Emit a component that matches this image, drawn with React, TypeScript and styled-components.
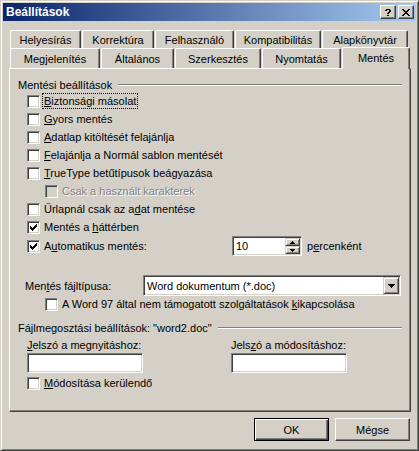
import React, { FC, ReactNode } from "react";
import styled, { createGlobalStyle } from "styled-components";

const FACE = "#d4d0c8";
const SHADOW = "#808080";
const DARK = "#404040";

const GlobalStyle = createGlobalStyle`
  html, body {
    margin: 0;
    padding: 0;
    background: ${FACE};
  }
  body {
    font-family: "Liberation Sans", Arial, sans-serif;
    font-size: 11px;
    line-height: 14px;
    color: #000;
  }
`;

const Window = styled.div`
  box-sizing: border-box;
  width: 419px;
  height: 451px;
  border: 1px solid;
  border-color: ${FACE} ${DARK} ${DARK} ${FACE};
  box-shadow: inset 1px 1px #fff, inset -1px -1px ${SHADOW};
  padding: 2px;
  background: ${FACE};
  display: flex;
  flex-direction: column;
`;

const TitleBar = styled.div`
  height: 18px;
  display: flex;
  align-items: center;
  padding: 0 2px 0 3px;
  background: linear-gradient(to right, #0a246a, #a6caf0);
`;

const Title = styled.div`
  flex: 1;
  color: #fff;
  font-weight: bold;
  font-size: 12px;
`;

const CaptionButton = styled.div<{ $gap?: number }>`
  box-sizing: border-box;
  width: 16px;
  height: 14px;
  margin-left: ${({ $gap }) => $gap ?? 0}px;
  background: ${FACE};
  border: 1px solid;
  border-color: #fff ${DARK} ${DARK} #fff;
  box-shadow: inset -1px -1px ${SHADOW};
  display: flex;
  align-items: center;
  justify-content: center;
`;

const Body = styled.div`
  padding-top: 9px;
`;

const TabRow = styled.div<{ $height: number }>`
  display: flex;
  align-items: flex-end;
  height: ${({ $height }) => $height}px;
  margin-left: 7px;
`;

const Tab = styled.div<{ $w: number; $h: number; $active?: boolean }>`
  box-sizing: border-box;
  flex: none;
  width: ${({ $w }) => $w}px;
  height: ${({ $h }) => $h}px;
  margin-right: 1px;
  margin-bottom: ${({ $active }) => ($active ? -1 : 0)}px;
  padding-bottom: ${({ $active }) => ($active ? 2 : 0)}px;
  align-self: ${({ $active }) => ($active ? "flex-end" : "flex-start")};
  border-top: 1px solid #fff;
  border-left: 1px solid #fff;
  border-right: 1px solid ${DARK};
  border-radius: 2px 2px 0 0;
  box-shadow: inset -1px 0 ${SHADOW};
  background: ${FACE};
  display: flex;
  align-items: center;
  justify-content: center;
  position: relative;
  z-index: ${({ $active }) => ($active ? 2 : 1)};
`;

const Panel = styled.div`
  box-sizing: border-box;
  width: 402px;
  height: 344px;
  margin-left: 6px;
  border: 1px solid;
  border-color: #fff ${DARK} ${DARK} #fff;
  box-shadow: inset -1px -1px ${SHADOW};
  padding: 9px 8px 0 8px;
`;

const GroupHeader = styled.div<{ $top?: number }>`
  display: flex;
  align-items: center;
  height: 14px;
  margin-top: ${({ $top }) => $top ?? 0}px;
`;

const GroupLine = styled.div`
  flex: 1;
  height: 0;
  border-top: 1px solid ${SHADOW};
  border-bottom: 1px solid #fff;
  margin-left: 6px;
`;

const CheckRow = styled.div<{ $indent: number; $h?: number; $top?: number }>`
  display: flex;
  align-items: center;
  height: ${({ $h }) => $h ?? 18}px;
  margin-left: ${({ $indent }) => $indent}px;
  margin-top: ${({ $top }) => $top ?? 0}px;
`;

const CheckItem = styled.div<{ $w?: number }>`
  display: flex;
  align-items: center;
  gap: 4px;
  width: ${({ $w }) => ($w ? `${$w}px` : "auto")};
  flex: none;
`;

const Box = styled.span<{ $disabled?: boolean }>`
  box-sizing: border-box;
  width: 13px;
  height: 13px;
  flex: none;
  border: 1px solid;
  border-color: ${SHADOW} #fff #fff ${SHADOW};
  box-shadow: inset 1px 1px ${DARK}, inset -1px -1px ${FACE};
  background: ${({ $disabled }) => ($disabled ? FACE : "#fff")};
  display: flex;
  align-items: center;
  justify-content: center;
`;

const Label = styled.span<{ $disabled?: boolean; $focus?: boolean }>`
  white-space: nowrap;
  color: ${({ $disabled }) => ($disabled ? SHADOW : "#000")};
  text-shadow: ${({ $disabled }) => ($disabled ? "1px 1px #fff" : "none")};
  border: ${({ $focus }) => ($focus ? "1px dotted #000" : "none")};
  padding: ${({ $focus }) => ($focus ? "0 1px" : "0")};
  margin-left: ${({ $focus }) => ($focus ? -2 : 0)}px;
`;

const Sunken = styled.div<{ $w: number; $h: number }>`
  box-sizing: border-box;
  width: ${({ $w }) => $w}px;
  height: ${({ $h }) => $h}px;
  flex: none;
  border: 1px solid;
  border-color: ${SHADOW} #fff #fff ${SHADOW};
  box-shadow: inset 1px 1px ${DARK}, inset -1px -1px ${FACE};
  background: #fff;
  padding: 1px;
  display: flex;
  align-items: stretch;
`;

const FieldText = styled.div`
  flex: 1;
  display: flex;
  align-items: center;
  padding-left: 2px;
  white-space: nowrap;
`;

const SpinColumn = styled.div`
  width: 15px;
  display: flex;
  flex-direction: column;
`;

const RaisedButton = styled.div`
  box-sizing: border-box;
  flex: 1;
  background: ${FACE};
  border: 1px solid;
  border-color: ${FACE} ${DARK} ${DARK} ${FACE};
  box-shadow: inset 1px 1px #fff, inset -1px -1px ${SHADOW};
  display: flex;
  align-items: center;
  justify-content: center;
`;

const DropButton = styled(RaisedButton)`
  flex: none;
  width: 16px;
`;

const Unit = styled.span`
  margin-left: 5px;
`;

const ComboRow = styled.div`
  display: flex;
  align-items: center;
  margin-top: 19px;
`;

const ComboLabel = styled.span`
  width: 118px;
  margin-left: 7px;
  flex: none;
`;

const PasswordGrid = styled.div`
  display: grid;
  grid-template-columns: 204px auto;
  margin-left: 9px;
  margin-top: 3px;
  row-gap: 1px;
`;

const ButtonRow = styled.div`
  display: flex;
  justify-content: flex-end;
  gap: 6px;
  margin-top: 6px;
  padding-right: 6px;
`;

const PushButton = styled.div<{ $default?: boolean }>`
  box-sizing: border-box;
  width: 75px;
  height: 23px;
  background: ${FACE};
  border: 1px solid;
  border-color: ${({ $default }) =>
    $default ? "#000" : `#fff ${DARK} ${DARK} #fff`};
  box-shadow: ${({ $default }) =>
    $default
      ? `inset 1px 1px #fff, inset -1px -1px ${DARK}, inset -2px -2px ${SHADOW}`
      : `inset -1px -1px ${SHADOW}`};
  display: flex;
  align-items: center;
  justify-content: center;
`;

const Pixels: FC<{ w: number; h: number; d: string }> = ({ w, h, d }) => (
  <svg width={w} height={h} viewBox={`0 0 ${w} ${h}`} shapeRendering="crispEdges">
    <path d={d} fill="#000" />
  </svg>
);

const CHECK =
  "M6 0h1v1h-1z M5 1h2v1h-2z M0 2h1v1h-1z M4 2h3v1h-3z M0 3h2v1h-2z M3 3h3v1h-3z M0 4h5v1h-5z M1 5h3v1h-3z M2 6h1v1h-1z";
const CLOSE =
  "M0 0h2v1h-2z M6 0h2v1h-2z M1 1h2v1h-2z M5 1h2v1h-2z M2 2h4v1h-4z M3 3h2v1h-2z M2 4h4v1h-4z M1 5h2v1h-2z M5 5h2v1h-2z M0 6h2v1h-2z M6 6h2v1h-2z";
const HELP =
  "M1 0h4v1h-4z M0 1h2v1h-2z M4 1h2v1h-2z M4 2h2v1h-2z M3 3h2v1h-2z M2 4h2v1h-2z M2 6h2v1h-2z";
const UP = "M2 0h1v1h-1z M1 1h3v1h-3z M0 2h5v1h-5z";
const DOWN = "M0 0h5v1h-5z M1 1h3v1h-3z M2 2h1v1h-1z";
const DROP = "M0 0h7v1h-7z M1 1h5v1h-5z M2 2h3v1h-3z M3 3h1v1h-1z";

interface ICheckProps {
  checked?: boolean;
  disabled?: boolean;
  focus?: boolean;
  width?: number;
  children: ReactNode;
}

const Check: FC<ICheckProps> = ({ checked, disabled, focus, width, children }) => (
  <CheckItem $w={width}>
    <Box $disabled={disabled}>{checked && <Pixels w={7} h={7} d={CHECK} />}</Box>
    <Label $disabled={disabled} $focus={focus}>
      {children}
    </Label>
  </CheckItem>
);

const backTabs = [
  { label: "Helyesírás", w: 71 },
  { label: "Korrektúra", w: 72 },
  { label: "Felhasználó", w: 79 },
  { label: "Kompatibilitás", w: 86 },
  { label: "Alapkönyvtár", w: 86 },
];

const frontTabs = [
  { label: "Megjelenítés", w: 90 },
  { label: "Általános", w: 73 },
  { label: "Szerkesztés", w: 86 },
  { label: "Nyomtatás", w: 79 },
  { label: "Mentés", w: 68, active: true },
];

const App: FC = () => {
  return (
    <>
      <GlobalStyle />
      <Window>
        <TitleBar>
          <Title>Beállítások</Title>
          <CaptionButton>
            <Pixels w={6} h={7} d={HELP} />
          </CaptionButton>
          <CaptionButton $gap={2}>
            <Pixels w={8} h={7} d={CLOSE} />
          </CaptionButton>
        </TitleBar>

        <Body>
          <TabRow $height={18}>
            {backTabs.map((tab) => (
              <Tab key={tab.label} $w={tab.w} $h={19}>
                {tab.label}
              </Tab>
            ))}
          </TabRow>
          <TabRow $height={20}>
            {frontTabs.map((tab) => (
              <Tab key={tab.label} $w={tab.w} $h={tab.active ? 22 : 20} $active={tab.active}>
                {tab.label}
              </Tab>
            ))}
          </TabRow>

          <Panel>
            <GroupHeader>
              <span>Mentési beállítások</span>
              <GroupLine />
            </GroupHeader>

            <CheckRow $indent={9}>
              <Check focus>
                <u>B</u>iztonsági másolat
              </Check>
            </CheckRow>
            <CheckRow $indent={9}>
              <Check>
                <u>G</u>yors mentés
              </Check>
            </CheckRow>
            <CheckRow $indent={9}>
              <Check>
                <u>A</u>datlap kitöltését felajánlja
              </Check>
            </CheckRow>
            <CheckRow $indent={9}>
              <Check>
                <u>F</u>elajánlja a Normál sablon mentését
              </Check>
            </CheckRow>
            <CheckRow $indent={9}>
              <Check>
                <u>T</u>rueType betűtípusok beágyazása
              </Check>
            </CheckRow>
            <CheckRow $indent={27}>
              <Check disabled>Csak a használt karakterek</Check>
            </CheckRow>
            <CheckRow $indent={9}>
              <Check>
                Űrlapnál csak az a<u>d</u>at mentése
              </Check>
            </CheckRow>
            <CheckRow $indent={9}>
              <Check checked>
                Mentés a <u>h</u>áttérben
              </Check>
            </CheckRow>
            <CheckRow $indent={9} $h={20}>
              <Check checked width={205}>
                A<u>u</u>tomatikus mentés:
              </Check>
              <Sunken $w={70} $h={20}>
                <FieldText>10</FieldText>
                <SpinColumn>
                  <RaisedButton>
                    <Pixels w={5} h={3} d={UP} />
                  </RaisedButton>
                  <RaisedButton>
                    <Pixels w={5} h={3} d={DOWN} />
                  </RaisedButton>
                </SpinColumn>
              </Sunken>
              <Unit>
                p<u>e</u>rcenként
              </Unit>
            </CheckRow>

            <ComboRow>
              <ComboLabel>
                Men<u>t</u>és fájltípusa:
              </ComboLabel>
              <Sunken $w={258} $h={21}>
                <FieldText>Word dokumentum (*.doc)</FieldText>
                <DropButton>
                  <Pixels w={7} h={4} d={DROP} />
                </DropButton>
              </Sunken>
            </ComboRow>
            <CheckRow $indent={27} $h={14} $top={1}>
              <Check>
                A Word 97 által nem támogatott szolgáltatások <u>k</u>ikapcsolása
              </Check>
            </CheckRow>

            <GroupHeader $top={10}>
              <span>Fájlmegosztási beállítások: "word2.doc"</span>
              <GroupLine />
            </GroupHeader>
            <PasswordGrid>
              <span>
                <u>J</u>elszó a megnyitáshoz:
              </span>
              <span>
                Jels<u>z</u>ó a módosításhoz:
              </span>
              <Sunken $w={116} $h={20} />
              <Sunken $w={116} $h={20} />
            </PasswordGrid>
            <CheckRow $indent={9} $top={1}>
              <Check>
                <u>M</u>ódosítása kerülendő
              </Check>
            </CheckRow>
          </Panel>

          <ButtonRow>
            <PushButton $default>OK</PushButton>
            <PushButton>Mégse</PushButton>
          </ButtonRow>
        </Body>
      </Window>
    </>
  );
};

export default App;
